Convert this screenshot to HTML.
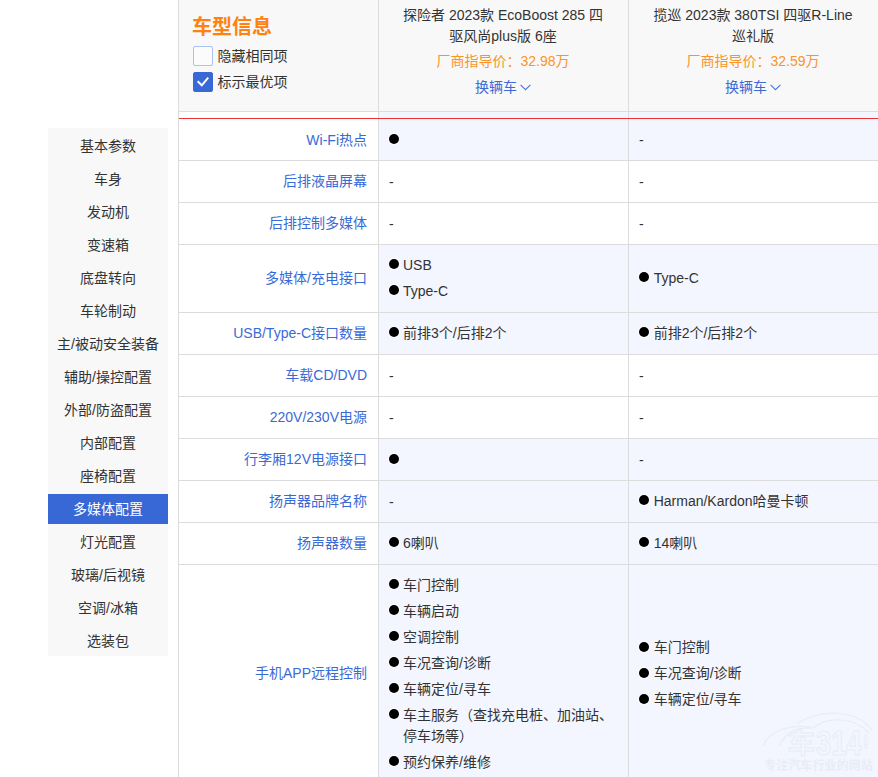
<!DOCTYPE html>
<html lang="zh-CN">
<head>
<meta charset="utf-8">
<title>车型参数对比</title>
<style>
*{box-sizing:border-box;margin:0;padding:0}
html,body{width:878px;height:777px;overflow:hidden;background:#fff}
body{font-family:"Liberation Sans","Noto Sans CJK SC",sans-serif;font-size:14px;color:#333;position:relative}
ul{list-style:none}
/* sidebar */
#nav{position:absolute;left:48px;top:128px;width:120px;height:528px;background:#f8f8f8}
#nav li{height:30px;line-height:30px;margin-top:3px;text-align:center;color:#333;font-size:14px;white-space:nowrap}
#nav li.on{background:#3768d6;color:#fff}
/* main */
#main{position:absolute;left:178px;top:0;width:700px;height:777px;border-left:1px solid #dcdcdc}
#head{position:absolute;left:0;top:0;width:699px;height:112px;background:#f8f8f8;border-bottom:1px solid #dcdcdc}
#head .info{position:absolute;left:0;top:0;width:200px;height:111px;border-right:1px solid #dcdcdc}
#head h2{position:absolute;left:13px;top:13px;font-size:20px;line-height:28px;color:#ff8211;font-weight:bold}
.ck{position:absolute;left:14px;height:20px;line-height:20px;font-size:14px;color:#333;padding-left:24.5px;white-space:nowrap}
.ck i{position:absolute;left:0;top:0;width:20px;height:20px;border:1px solid #a9c1f3;border-radius:2px;background:#fbfbfb}
.ck.on i{background:#3768d6;border-color:#3768d6}
.ck svg{position:absolute;left:0;top:0}
.car{position:absolute;top:0;width:250px;height:111px;text-align:center;border-right:1px solid #dcdcdc;padding:5px 20px 0}
.car.c1{left:200px}
.car.c1>div{position:relative;left:-0.5px}
.car.c2{left:450px;border-right:0}
.car.c2>div{position:relative;left:-1px}
.car .nm{line-height:21px;color:#333}
.car .pr{line-height:21px;color:#fa9429;margin-top:4px}
.car .ch{line-height:21px;color:#3a6ad6;margin-top:5px}
.car .ch svg{vertical-align:middle;margin-top:-2px;margin-left:-1px}
#red{position:absolute;left:0;top:118px;width:699px;height:1px;background:#ee3232;z-index:2}
table{position:absolute;left:0;top:112px;width:699px;border-collapse:separate;border-spacing:0;table-layout:fixed}
tr:first-child td{padding-top:15px;padding-bottom:7px}
td{border-bottom:1px solid #dcdcdc;vertical-align:middle;padding:7px 0 8px}
td.l{width:200px;text-align:right;padding-right:11px;color:#3a6ad6;border-right:1px solid #dcdcdc;line-height:26px}
td.v{width:250px;padding-left:10px;padding-right:10px;border-right:1px solid #dcdcdc;color:#333}
td.v:last-child{border-right:0}
tr.d td.v{background:#f3f6fe}
td.v li{line-height:21px;padding:2.5px 0 2.5px 14px;position:relative}
td.v:last-child li{padding-left:14.7px}
td.v li.n{padding:3.5px 0 1.5px 0}
tr:first-child td.v li.n{padding:2.5px 0}
td.v li b{position:absolute;left:0;top:7px;width:10px;height:10px;border-radius:50%;background:#000;box-shadow:0 0 1px 1px rgba(255,255,255,.85)}
td.v li b.s{top:8px}
</style>
</head>
<body>
<ul id="nav">
<li>基本参数</li>
<li>车身</li>
<li>发动机</li>
<li>变速箱</li>
<li>底盘转向</li>
<li>车轮制动</li>
<li>主/被动安全装备</li>
<li>辅助/操控配置</li>
<li>外部/防盗配置</li>
<li>内部配置</li>
<li>座椅配置</li>
<li class="on">多媒体配置</li>
<li>灯光配置</li>
<li>玻璃/后视镜</li>
<li>空调/冰箱</li>
<li>选装包</li>
</ul>
<div id="main">
<div id="head">
  <div class="info">
    <h2>车型信息</h2>
    <div class="ck" style="top:46px"><i></i>隐藏相同项</div>
    <div class="ck on" style="top:72px"><i></i><svg width="20" height="20" viewBox="0 0 20 20"><path d="M4.6 9.2 L8.8 13.3 L15.2 5.6" fill="none" stroke="#fff" stroke-width="2"/></svg>标示最优项</div>
  </div>
  <div class="car c1">
    <div class="nm">探险者 2023款 EcoBoost 285 四驱风尚plus版 6座</div>
    <div class="pr">厂商指导价：32.98万</div>
    <div class="ch">换辆车 <svg width="11" height="7" viewBox="0 0 11 7"><path d="M0.6 0.8 L5.5 5.7 L10.4 0.8" fill="none" stroke="#4a76dc" stroke-width="1.1"/></svg></div>
  </div>
  <div class="car c2">
    <div class="nm">揽巡 2023款 380TSI 四驱R-Line 巡礼版</div>
    <div class="pr">厂商指导价：32.59万</div>
    <div class="ch">换辆车 <svg width="11" height="7" viewBox="0 0 11 7"><path d="M0.6 0.8 L5.5 5.7 L10.4 0.8" fill="none" stroke="#4a76dc" stroke-width="1.1"/></svg></div>
  </div>
</div>
<div id="red"></div>
<table>
<tr class="d"><td class="l">Wi-Fi热点</td><td class="v"><ul><li><b></b>&nbsp;</li></ul></td><td class="v"><ul><li class="n">-</li></ul></td></tr>
<tr><td class="l">后排液晶屏幕</td><td class="v"><ul><li class="n">-</li></ul></td><td class="v"><ul><li class="n">-</li></ul></td></tr>
<tr><td class="l">后排控制多媒体</td><td class="v"><ul><li class="n">-</li></ul></td><td class="v"><ul><li class="n">-</li></ul></td></tr>
<tr class="d"><td class="l">多媒体/充电接口</td><td class="v"><ul><li><b></b>USB</li><li><b></b>Type-C</li></ul></td><td class="v"><ul><li><b></b>Type-C</li></ul></td></tr>
<tr class="d"><td class="l">USB/Type-C接口数量</td><td class="v"><ul><li><b></b>前排3个/后排2个</li></ul></td><td class="v"><ul><li><b></b>前排2个/后排2个</li></ul></td></tr>
<tr><td class="l">车载CD/DVD</td><td class="v"><ul><li class="n">-</li></ul></td><td class="v"><ul><li class="n">-</li></ul></td></tr>
<tr><td class="l">220V/230V电源</td><td class="v"><ul><li class="n">-</li></ul></td><td class="v"><ul><li class="n">-</li></ul></td></tr>
<tr class="d"><td class="l">行李厢12V电源接口</td><td class="v"><ul><li><b class="s"></b>&nbsp;</li></ul></td><td class="v"><ul><li class="n">-</li></ul></td></tr>
<tr class="d"><td class="l">扬声器品牌名称</td><td class="v"><ul><li class="n">-</li></ul></td><td class="v"><ul><li><b></b>Harman/Kardon哈曼卡顿</li></ul></td></tr>
<tr class="d"><td class="l">扬声器数量</td><td class="v"><ul><li><b></b>6喇叭</li></ul></td><td class="v"><ul><li><b></b>14喇叭</li></ul></td></tr>
<tr class="d"><td class="l"><span style="position:relative;top:-1px">手机APP远程控制</span></td><td class="v"><ul><li><b></b>车门控制</li><li><b></b>车辆启动</li><li><b></b>空调控制</li><li><b></b>车况查询/诊断</li><li><b></b>车辆定位/寻车</li><li><b></b>车主服务（查找充电桩、加油站、停车场等）</li><li><b></b>预约保养/维修</li></ul></td><td class="v"><ul><li><b></b>车门控制</li><li><b></b>车况查询/诊断</li><li><b></b>车辆定位/寻车</li></ul></td></tr>
</table>
<svg id="wm" width="118" height="70" viewBox="0 0 118 70" style="position:absolute;left:582px;top:707px;z-index:3">
<path d="M2 39 C8 24 28 17 50 20 M36 17 C58 1 96 2 112 24 M18 39 C24 26 36 20 52 21 C66 9 94 10 108 26" fill="none" stroke="#e8ecf7" stroke-width="1.2"/>
<text x="27" y="46" font-family="'Liberation Sans','Noto Sans CJK SC',sans-serif" font-size="27" font-weight="bold" fill="none" stroke="#e8ecf7" stroke-width="1">车</text>
<text transform="translate(55 47.5) scale(0.78 1)" font-family="'Liberation Sans',sans-serif" font-size="35" font-weight="bold" fill="none" stroke="#e8ecf7" stroke-width="1.1">314</text>
<text x="103" y="26" font-family="'Liberation Sans',sans-serif" font-size="6" font-weight="bold" fill="#e8ecf7" transform="rotate(90 103 26)">.COM</text>
<text x="3" y="63" font-family="'Liberation Sans','Noto Sans CJK SC',sans-serif" font-size="12" font-weight="bold" fill="#e8ecf7" textLength="109">专注汽车行业的网站</text>
</svg>
</div>
</body>
</html>
